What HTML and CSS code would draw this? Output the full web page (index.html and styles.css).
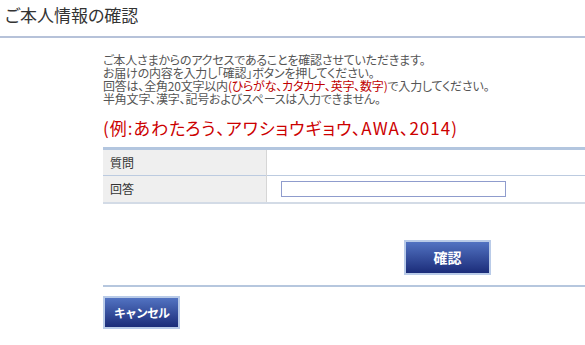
FILE: index.html
```html
<!DOCTYPE html>
<html lang="ja">
<head>
    <meta charset="UTF-8">
    <title>ご本人情報の確認</title>
    <link rel="stylesheet" href="styles.css">
</head>
<body>
    <h1 class="page-title">ご本人情報の確認</h1>

    <div class="content">
        <p class="intro">
            ご本人さまからのアクセスであることを確認させていただきます。<br>
            お届けの内容を入力し「確認」ボタンを押してください。<br>
            回答は、全角20文字以内<span class="red">(ひらがな、カタカナ、英字、数字)</span>で入力してください。<br>
            半角文字、漢字、記号およびスペースは入力できません。
        </p>

        <p class="example">(例:あわたろう、アワショウギョウ、AWA、2014)</p>

        <table class="qa-table">
            <tr>
                <th>質問</th>
                <td></td>
            </tr>
            <tr>
                <th>回答</th>
                <td><input type="text" class="answer-input"></td>
            </tr>
        </table>

        <div class="confirm-row">
            <button class="btn btn-confirm">確認</button>
        </div>

        <div class="cancel-row">
            <button class="btn btn-cancel">キャンセル</button>
        </div>
    </div>
</body>
</html>
```

FILE: styles.css
```css
body {
    margin: 0;
    padding: 0;
    background: #fff;
    color: #444;
    font-family: "Noto Sans CJK JP", "Noto Sans", sans-serif;
    font-feature-settings: "palt";
}

.page-title {
    margin: 0;
    height: 36px;
    padding-left: 5px;
    font-size: 17px;
    font-weight: normal;
    line-height: 30px;
    color: #333;
    border-bottom: 2px solid #b6c2d9;
}

.content {
    padding-left: 103px;
}

.intro {
    margin: 15px 0 0;
    font-size: 12px;
    line-height: 13px;
    letter-spacing: -0.2px;
    color: #555;
}

.red {
    color: #c00000;
}

.example {
    margin: 13px 0 0;
    font-size: 17px;
    line-height: 20px;
    letter-spacing: 1px;
    color: #cc0000;
}

.qa-table {
    margin-top: 9px;
    width: 100%;
    border-collapse: collapse;
    border-top: 3px solid #b3c6df;
    border-bottom: 2px solid #d3dbe6;
    font-size: 12px;
}

.qa-table tr {
    height: 27px;
}

.qa-table tr + tr {
    border-top: 1px solid #bccbe0;
}

.qa-table th {
    width: 156px;
    padding: 0 0 0 7px;
    background: #efefef;
    border-right: 1px solid #d6d6d6;
    text-align: left;
    font-weight: normal;
    color: #333;
}

.qa-table td {
    padding: 0 0 0 14px;
}

.answer-input {
    display: block;
    box-sizing: border-box;
    width: 225px;
    height: 16px;
    margin: 0;
    border: 1px solid #8f9ccd;
    padding: 0 2px;
}

.confirm-row {
    padding: 36px 0 10px 301px;
    border-bottom: 2px solid #b6c7de;
}

.btn {
    display: block;
    box-sizing: border-box;
    border: 2px solid #b9cbe8;
    background: linear-gradient(#5273c2, #1b2c79);
    color: #fff;
    font-family: inherit;
    font-weight: bold;
    font-size: 12px;
    cursor: pointer;
}

.btn-confirm {
    width: 87px;
    height: 35px;
    font-size: 14px;
}

.btn-cancel {
    width: 77px;
    height: 33px;
    letter-spacing: -1px;
}

.cancel-row {
    padding-top: 9px;
}
```
